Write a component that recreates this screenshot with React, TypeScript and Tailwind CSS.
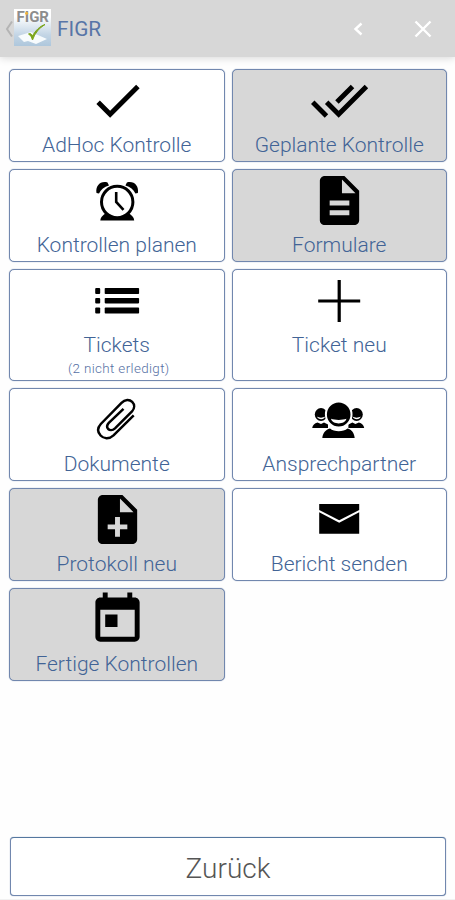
import type { ReactNode } from "react";

type Tile = {
  label: string;
  note?: string;
  active?: boolean;
  icon: ReactNode;
};

function MaterialIcon({ d }: { d: string }) {
  return (
    <svg
      viewBox="0 0 24 24"
      className="ml-px h-[59px] w-[59px] shrink-0 fill-black"
    >
      <path d={d} />
    </svg>
  );
}

function Drawing({ children }: { children: ReactNode }) {
  return (
    <svg
      viewBox="0 0 59 59"
      className="ml-px h-[59px] w-[59px] shrink-0 fill-black"
    >
      {children}
    </svg>
  );
}

const tiles: Tile[] = [
  {
    label: "AdHoc Kontrolle",
    icon: (
      <MaterialIcon d="M9 16.17L4.83 12l-1.42 1.41L9 19 21 7l-1.41-1.41z" />
    ),
  },
  {
    label: "Geplante Kontrolle",
    active: true,
    icon: (
      <MaterialIcon d="M18 7l-1.41-1.41-6.34 6.34 1.41 1.41L18 7zm4.24-1.41L11.66 16.17 7.48 12l-1.41 1.41L11.66 19l12-12-1.42-1.41zM.41 13.41L6 19l1.41-1.41L1.83 12 .41 13.41z" />
    ),
  },
  {
    label: "Kontrollen planen",
    icon: (
      <Drawing>
        <path d="M8.5 22C7.2 15 12.5 9.5 19.5 11.5L21 14.5C16 16 13 18.5 11 22.5z" />
        <path d="M49.9 22C51.2 15 45.9 9.5 38.9 11.5L37.4 14.5C42.4 16 45.4 18.5 47.4 22.5z" />
        <path d="M12.3 49.5C12.5 46 14.5 44.5 18 42L40.4 42C44 44.5 46 46 46.2 49.5z" />
        <circle
          cx="29.2"
          cy="31"
          r="15.7"
          className="fill-white stroke-black stroke-[3]"
        />
        <path
          d="M28.2 21V31L35.5 38.8"
          className="fill-none stroke-black stroke-[2.6]"
        />
      </Drawing>
    ),
  },
  {
    label: "Formulare",
    active: true,
    icon: (
      <MaterialIcon d="M14 2H6c-1.1 0-1.99.9-1.99 2L4 20c0 1.1.89 2 1.99 2H18c1.1 0 2-.9 2-2V8l-6-6zm2 16H8v-2h8v2zm0-4H8v-2h8v2zm-3-5V3.5L18.5 9H13z" />
    ),
  },
  {
    label: "Tickets",
    note: "(2 nicht erledigt)",
    icon: (
      <Drawing>
        <rect x="7.2" y="17" width="5" height="6" rx="1" />
        <rect x="7.2" y="27" width="5" height="5.4" rx="1" />
        <rect x="7.2" y="36.6" width="5" height="6" rx="1" />
        <rect x="16.7" y="17" width="34.4" height="6" rx="0.8" />
        <rect x="16.7" y="27" width="34.4" height="5.4" rx="0.8" />
        <rect x="16.7" y="36.6" width="34.4" height="6" rx="0.8" />
      </Drawing>
    ),
  },
  {
    label: "Ticket neu",
    icon: (
      <Drawing>
        <path
          d="M29.2 9V51M8.2 30H50.2"
          className="fill-none stroke-black stroke-[3.2]"
        />
      </Drawing>
    ),
  },
  {
    label: "Dokumente",
    icon: (
      <Drawing>
        <path
          d="M45.7 25.3L25.5 45.3C21 49.5 15.5 48.6 12.6 45.5C9.4 42 9.6 37.6 12.8 34L33.5 12.8C37 9.2 41.6 9.3 44.2 11.9C46.9 14.6 46.7 18.4 44 21.5L27 38.3C24.3 40.8 21.6 40.4 20.2 39C18.7 37.3 18.8 35 20.8 32.8L35.5 18.8"
          className="fill-none stroke-black stroke-[2.5]"
        />
      </Drawing>
    ),
  },
  {
    label: "Ansprechpartner",
    icon: (
      <Drawing>
        <ellipse cx="11" cy="24.5" rx="6.2" ry="6.4" />
        <path d="M7 26.5C9 28 13 28 15 26.5C14.5 30 8 30 7 26.5z" fill="white" />
        <path d="M2.2 38C2.7 35 4.5 33.3 7.5 32.5L11 34L14 32.5L18 34.5V38z" />
        <ellipse cx="46.6" cy="24.5" rx="6.2" ry="6.4" />
        <path d="M42.6 26.5C44.6 28 48.6 28 50.6 26.5C50.1 30 43.6 30 42.6 26.5z" fill="white" />
        <path d="M54.2 38C53.7 35 51.9 33.3 48.9 32.5L45.4 34L42.4 32.5L38.4 34.5V38z" />
        <ellipse
          cx="28.7"
          cy="24.5"
          rx="12.8"
          ry="13"
          className="stroke-white stroke-2"
        />
        <path
          d="M21 28.8C25 30.3 32.4 30.3 36.4 28.8C35.4 34.9 22 34.9 21 28.8z"
          fill="white"
        />
        <path d="M12.3 48C13 42.5 15.5 40 20 38.5C24 42 33.5 42 37.5 38.5C42 40 44 42.5 44.7 48z" />
      </Drawing>
    ),
  },
  {
    label: "Protokoll neu",
    active: true,
    icon: (
      <MaterialIcon d="M14 2H6c-1.1 0-1.99.9-1.99 2L4 20c0 1.1.89 2 1.99 2H18c1.1 0 2-.9 2-2V8l-6-6zm2 14h-3v3h-2v-3H8v-2h3v-3h2v3h3v2zm-3-7V3.5L18.5 9H13z" />
    ),
  },
  {
    label: "Bericht senden",
    icon: (
      <Drawing>
        <path d="M9.2 14H49.2V20L29.2 30.2L9.2 20z" />
        <path d="M9.2 22.3L29.2 32.8L49.2 22.3V43.7H9.2z" />
      </Drawing>
    ),
  },
  {
    label: "Fertige Kontrollen",
    active: true,
    icon: (
      <MaterialIcon d="M19 3h-1V1h-2v2H8V1H6v2H5c-1.11 0-1.99.9-1.99 2L3 19c0 1.1.89 2 2 2h14c1.1 0 2-.9 2-2V5c0-1.1-.9-2-2-2zm0 16H5V8h14v11zM7 10h5v5H7z" />
    ),
  },
];

function TileButton({ tile }: { tile: Tile }) {
  return (
    <button
      className={`flex flex-col items-center rounded-[5px] border border-[#7187ae] pt-px shadow-[0_0_1px_#7187ae] ${tile.active ? "bg-[#d7d7d7]" : "bg-white"}`}
    >
      {tile.icon}
      <span className="mt-0.5 text-[21px] leading-[26px] font-light whitespace-nowrap text-[#426496]">
        {tile.label}
      </span>
      {tile.note && (
        <span className="mt-px ml-1 text-[13.4px] leading-5 font-light tracking-[0.36px] text-[#5670a4]">
          {tile.note}
        </span>
      )}
    </button>
  );
}

function Logo() {
  return (
    <svg viewBox="0 0 37 37" className="h-[37px] w-[37px]">
      <defs>
        <linearGradient id="sky" x1="0" y1="0" x2="0" y2="1">
          <stop offset="0.2" stopColor="#ffffff" />
          <stop offset="0.7" stopColor="#c3d5e5" />
          <stop offset="1" stopColor="#aec7dc" />
        </linearGradient>
      </defs>
      <rect width="37" height="37" fill="url(#sky)" />
      <path d="M4 27L17 23L33 30L22 35L14 32L10 33z" fill="#f7fbfd" />
      <text
        x="2.5"
        y="13.2"
        textLength="32.5"
        lengthAdjust="spacingAndGlyphs"
        className="fill-[#8d8d8d] text-[14px] font-bold"
      >
        FIGR
      </text>
      <circle cx="12.6" cy="4.2" r="1.5" fill="#efb33a" />
      <path
        d="M14.5 25C16.5 26 17.5 28 18.5 31C21 24 25 19 31 15.5C26 17 21 22 18.5 27C17.5 25 16.5 24 14.5 25z"
        className="fill-[#7ba51b] stroke-[#7ba51b]"
      />
    </svg>
  );
}

export default function App() {
  return (
    <div className="flex h-[900px] w-[455px] flex-col overflow-hidden bg-[#fefefe] font-['Roboto',sans-serif]">
      <header className="flex h-[57px] shrink-0 items-center bg-[#d7d7d7] pr-[23px] pl-[5px] shadow-[0_1px_8px_rgba(0,0,0,0.16)]">
        <svg
          viewBox="0 0 9 18"
          className="h-[18px] w-[9px] fill-none stroke-[#b4b4b4] stroke-2"
        >
          <path d="M7 1.5L2 9L7 16.5" />
        </svg>
        <div className="-mt-0.5 h-[37px]">
          <Logo />
        </div>
        <h1 className="mt-0.5 ml-1.5 text-[20.8px] text-[#5875a7]">FIGR</h1>
        <svg
          viewBox="0 0 12 16"
          className="ml-auto h-4 w-3 fill-none stroke-white stroke-[2.4]"
        >
          <path d="M9.5 2.5L3.5 8L9.5 13.5" />
        </svg>
        <svg
          viewBox="0 0 18 18"
          className="ml-[50px] h-[18px] w-[18px] fill-none stroke-white stroke-[2.4]"
        >
          <path d="M1.5 1.5L16.5 16.5M16.5 1.5L1.5 16.5" />
        </svg>
      </header>

      <main className="grid grid-cols-2 grid-rows-[93px_93px_112px_93px_93px_93px] gap-[7px] pt-3 pr-2 pl-[9px]">
        {tiles.map((tile) => (
          <TileButton key={tile.label} tile={tile} />
        ))}
      </main>

      <footer className="mt-auto border-b border-[#f1f1f1] pr-[9px] pb-[3px] pl-2.5">
        <button className="h-[59px] w-full rounded-[4px] border border-[#7187ae] border-t-[#54779f] bg-white pt-1 text-[28px] font-light text-[#555555] shadow-[0_0_1px_#7187ae]">
          Zurück
        </button>
      </footer>
    </div>
  );
}
